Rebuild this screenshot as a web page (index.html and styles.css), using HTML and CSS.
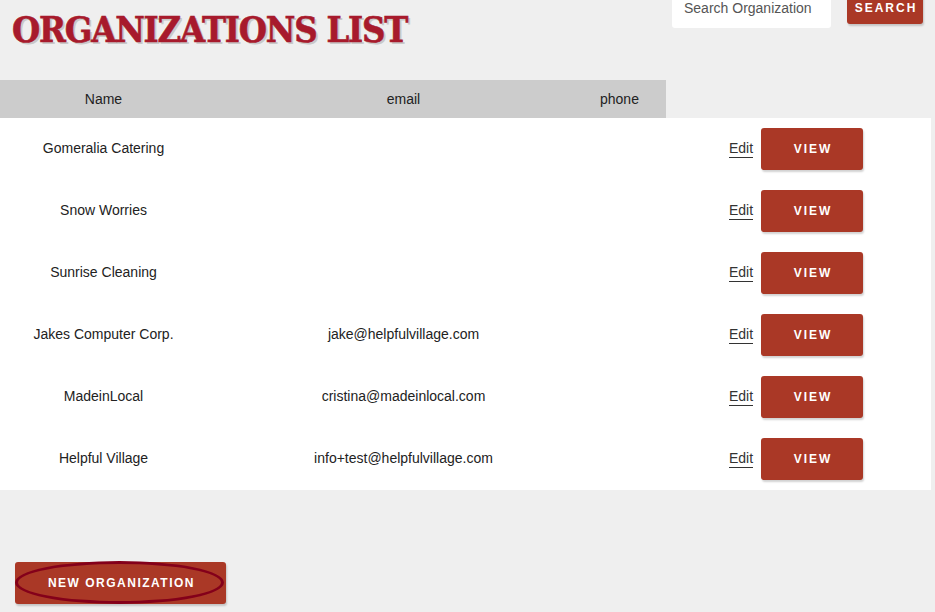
FILE: index.html
```html
<!DOCTYPE html>
<html lang="en">
<head>
<meta charset="utf-8">
<title>Organizations List</title>
<link rel="stylesheet" href="styles.css">
</head>
<body>
<div class="page">
  <header class="topbar">
    <h1 class="title">ORGANIZATIONS LIST</h1>
    <form class="search">
      <input class="search-input" type="text" placeholder="Search Organization">
      <button class="btn search-btn" type="button">SEARCH</button>
    </form>
  </header>

  <div class="thead">
    <div class="th">Name</div>
    <div class="th">email</div>
    <div class="th">phone</div>
  </div>

  <div class="tbody">
    <div class="tr">
      <div class="td">Gomeralia Catering</div>
      <div class="td"></div>
      <div class="td"></div>
      <div class="actions"><a class="edit" href="#">Edit</a><button class="btn view-btn" type="button">VIEW</button></div>
    </div>
    <div class="tr">
      <div class="td">Snow Worries</div>
      <div class="td"></div>
      <div class="td"></div>
      <div class="actions"><a class="edit" href="#">Edit</a><button class="btn view-btn" type="button">VIEW</button></div>
    </div>
    <div class="tr">
      <div class="td">Sunrise Cleaning</div>
      <div class="td"></div>
      <div class="td"></div>
      <div class="actions"><a class="edit" href="#">Edit</a><button class="btn view-btn" type="button">VIEW</button></div>
    </div>
    <div class="tr">
      <div class="td">Jakes Computer Corp.</div>
      <div class="td">jake@helpfulvillage.com</div>
      <div class="td"></div>
      <div class="actions"><a class="edit" href="#">Edit</a><button class="btn view-btn" type="button">VIEW</button></div>
    </div>
    <div class="tr">
      <div class="td">MadeinLocal</div>
      <div class="td">cristina@madeinlocal.com</div>
      <div class="td"></div>
      <div class="actions"><a class="edit" href="#">Edit</a><button class="btn view-btn" type="button">VIEW</button></div>
    </div>
    <div class="tr">
      <div class="td">Helpful Village</div>
      <div class="td">info+test@helpfulvillage.com</div>
      <div class="td"></div>
      <div class="actions"><a class="edit" href="#">Edit</a><button class="btn view-btn" type="button">VIEW</button></div>
    </div>
  </div>

  <div class="footer">
    <button class="btn new-btn" type="button">NEW ORGANIZATION</button>
  </div>
</div>
</body>
</html>
```

FILE: styles.css
```css
* {
  box-sizing: border-box;
}

html,
body {
  margin: 0;
  padding: 0;
  background: #efefef;
  height: 100%;
  overflow: hidden;
}

body {
  font-family: "Liberation Sans", Arial, sans-serif;
  font-size: 14px;
  color: #222;
}

.page {
  width: 931px;
}

/* top bar: title + search form */
.topbar {
  display: flex;
  justify-content: space-between;
  align-items: flex-start;
  height: 80px;
}

.title {
  margin: 9px 0 0 12px;
  font-family: "DejaVu Serif Condensed", "DejaVu Serif", serif;
  font-weight: 900;
  font-size: 36px;
  line-height: 40px;
  letter-spacing: -1.2px;
  color: #a71a2c;
  text-shadow: 2px 2px 0 #c9c9c9;
  -webkit-text-stroke: 0.6px #a71a2c;
}

.search {
  display: flex;
  align-items: flex-start;
  gap: 16px;
  margin-right: 8px;
}

.search-input {
  width: 159px;
  height: 40px;
  margin-top: -12px;
  padding: 0 12px;
  border: 0;
  border-radius: 3px;
  background: #fff;
  font-family: "Liberation Sans", Arial, sans-serif;
  font-size: 14px;
  color: #555;
  outline: none;
}

.search-input::placeholder {
  color: #555;
}

.btn {
  border: 0;
  border-radius: 3px;
  background: #aa3826;
  color: #fff;
  font-family: "Liberation Sans", Arial, sans-serif;
  font-weight: bold;
  font-size: 12px;
  letter-spacing: 2px;
  box-shadow: 1px 2px 2px rgba(0, 0, 0, 0.18);
  cursor: pointer;
}

.search-btn {
  width: 76px;
  height: 32px;
  margin-top: -8px;
  padding: 0 0 0 2px;
}

/* table header */
.thead {
  display: grid;
  grid-template-columns: 207px 393px 36px;
  width: 666px;
  height: 38px;
  align-items: center;
  background: #cccccc;
  color: #222;
}

.th {
  text-align: center;
}

/* table body */
.tbody {
  background: #fff;
}

.tr {
  display: grid;
  grid-template-columns: 207px 393px 66px 1fr;
  height: 62px;
  align-items: center;
}

.td {
  text-align: center;
  margin-top: -2px;
}

.actions {
  display: flex;
  align-items: center;
  gap: 8px;
  padding-left: 63px;
}

.edit {
  color: #333;
  text-decoration: none;
  border-bottom: 1px solid #333;
  line-height: 16px;
  padding-bottom: 1px;
}

.view-btn {
  width: 102px;
  height: 42px;
  padding: 0 0 0 2px;
}

/* bottom action */
.footer {
  padding: 72px 0 0 15px;
}

.new-btn {
  position: relative;
  width: 211px;
  height: 42px;
  padding: 0 0 0 2px;
  letter-spacing: 1.5px;
}

.new-btn::after {
  content: "";
  position: absolute;
  left: 0;
  right: 2px;
  top: -1px;
  bottom: 0;
  border: 3px solid #84001a;
  border-radius: 50%;
}
```
